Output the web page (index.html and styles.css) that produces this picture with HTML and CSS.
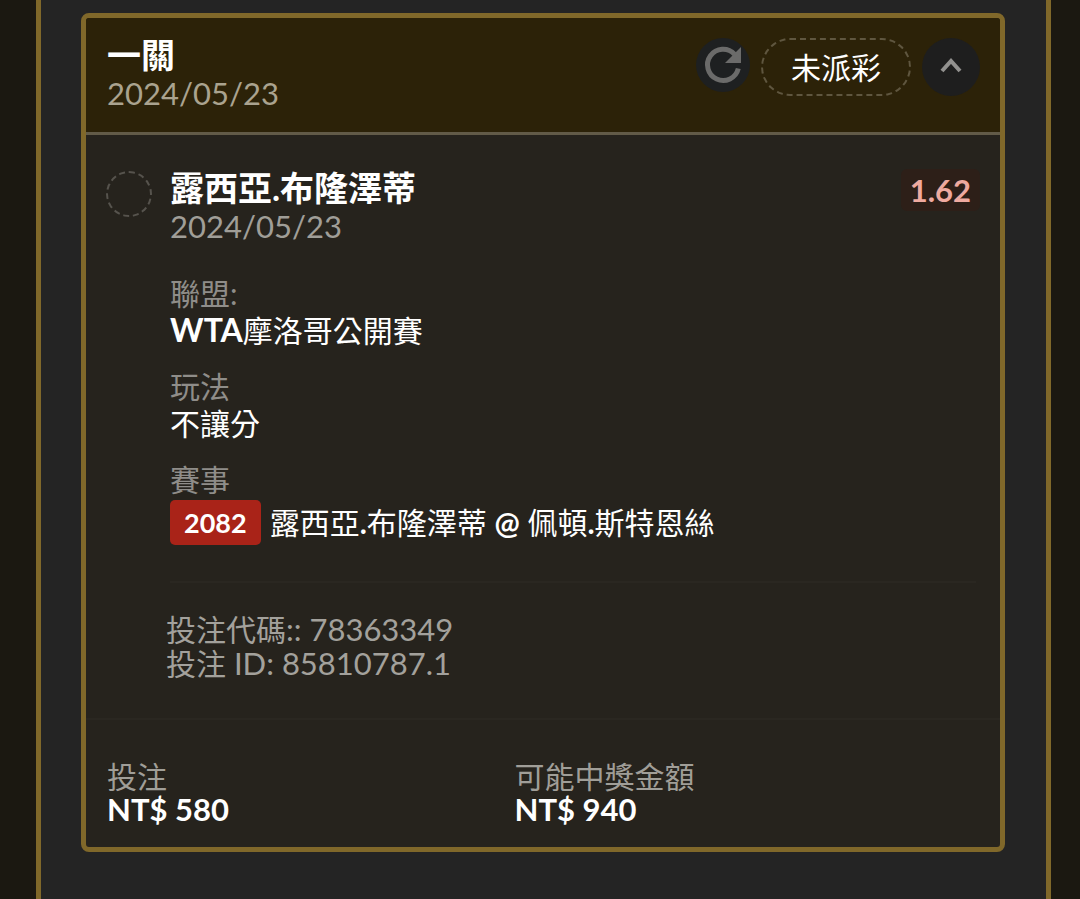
FILE: index.html
```html
<!DOCTYPE html>
<html lang="zh-Hant">
<head>
<meta charset="utf-8">
<meta name="viewport" content="width=device-width, initial-scale=1">
<title>投注紀錄</title>
<link rel="stylesheet" href="styles.css">
</head>
<body>
<main class="panel">
  <article class="card">
    <header class="card-head">
      <div class="head-text">
        <h1 class="title">一關</h1>
        <p class="date">2024/05/23</p>
      </div>
      <div class="actions">
        <button class="round refresh" type="button" aria-label="重新整理">
          <svg viewBox="0 0 40 40" width="40" height="40" aria-hidden="true">
            <path d="M35.300 23.500A15.600 15.600 0 1 1 31.500 9.200" fill="none" stroke="#6b6b6a" stroke-width="5"/>
            <path d="M38 2V18H22Z" fill="#6b6b6a"/>
          </svg>
        </button>
        <span class="pill">未派彩</span>
        <button class="round toggle" type="button" aria-label="收合">
          <svg viewBox="0 0 24 20" width="24" height="20" aria-hidden="true">
            <path d="M3 14L12 4L21 14" fill="none" stroke="#92918f" stroke-width="4"/>
          </svg>
        </button>
      </div>
    </header>
    <section class="pick">
      <span class="ring"></span>
      <div class="pick-main">
        <div class="pick-head">
          <div>
            <h2 class="title">露西亞.布隆澤蒂</h2>
            <p class="date">2024/05/23</p>
          </div>
          <span class="odds">1.62</span>
        </div>
        <dl class="details">
          <div class="detail"><dt>聯盟:</dt><dd><b class="league">WTA</b>摩洛哥公開賽</dd></div>
          <div class="detail"><dt>玩法</dt><dd>不讓分</dd></div>
          <div class="detail"><dt>賽事</dt><dd class="match"><span class="badge">2082</span><span>露西亞<b>.</b>布隆澤蒂 <b>@</b> 佩頓<b>.</b>斯特恩絲</span></dd></div>
        </dl>
        <div class="codes">
          <p>投注代碼<span class="num">:: 78363349</span></p>
          <p>投注<span class="num"> ID: 85810787.1</span></p>
        </div>
      </div>
    </section>
    <footer class="totals">
      <dl class="total"><dt>投注</dt><dd>NT$ 580</dd></dl>
      <dl class="total"><dt>可能中獎金額</dt><dd>NT$ 940</dd></dl>
    </footer>
  </article>
</main>
</body>
</html>
```
FILE: styles.css
```css
* { box-sizing: border-box; }
body {
  margin: 0;
  padding: 0 29px 0 36px;
  min-height: 100vh;
  display: flex;
  background: #1b1811;
  color: #fff;
  font-family: Lato, "Noto Sans CJK TC", sans-serif;
  font-size: 30px;
}
h1, h2, p, dl, dd { margin: 0; }
b { font-weight: 700; }
.league { font-size: 32px; line-height: 1; }
.panel {
  flex: 1;
  padding: 13px 41px 46px 40px;
  background: #242424;
  border: solid #80682a;
  border-width: 0 5px;
}
.card {
  background: #26231d;
  border: 5px solid #80682a;
  border-radius: 8px;
}
.card-head {
  display: flex;
  justify-content: space-between;
  align-items: flex-start;
  padding: 18px 20px 20px 21px;
  background: #2c2208;
  border-bottom: 3px solid #625b48;
  border-radius: 3px 3px 0 0;
}
.title {
  font-size: 34px;
  line-height: 38px;
  font-weight: 700;
}
.date {
  font-size: 31px;
  line-height: 38px;
  color: #a09e98;
}
.card-head .date { color: #aaa38f; }
.actions {
  display: flex;
  align-items: flex-start;
  gap: 11px;
  padding-top: 2px;
}
.round {
  display: grid;
  place-items: center;
  padding: 0;
  border: 0;
  border-radius: 50%;
}
.refresh { width: 54px; height: 54px; background: #1e2021; }
.toggle { width: 58px; height: 58px; background: #1e1e1e; }
.pill {
  padding: 0 28px;
  border: 2px dashed #5f563f;
  border-radius: 29px;
  line-height: 54px;
}
.pick {
  display: flex;
  align-items: flex-start;
  gap: 18px;
  padding: 34px 24px 0 20px;
  border-bottom: 2px solid #2a2721;
}
.ring {
  flex: none;
  width: 46px;
  height: 46px;
  margin-top: 2px;
  border: 2px dashed #56534d;
  border-radius: 50%;
}
.pick-main { flex: 1; }
.pick-head {
  display: flex;
  justify-content: space-between;
  align-items: flex-start;
}
.odds {
  margin-right: -4px;
  padding: 0 9px;
  border-radius: 6px;
  background: #2d1f18;
  color: #efaaa0;
  font-size: 31px;
  font-weight: 700;
  line-height: 42px;
}
.details {
  display: grid;
  gap: 19px;
  padding: 30px 0 36px;
  border-bottom: 2px solid #2a2721;
}
.detail { line-height: 37px; }
dt { color: #8f8d89; }
.match {
  display: flex;
  align-items: center;
  gap: 9px;
  margin-top: 2px;
}
.badge {
  padding: 0 14px;
  border-radius: 5px;
  background: #a92318;
  font-size: 27px;
  font-weight: 700;
  line-height: 45px;
}
.codes {
  margin-left: -4px;
  padding: 29px 0 38px;
  line-height: 34px;
  color: #a3a19c;
}
.num { font-size: 31px; }
.totals {
  display: grid;
  grid-template-columns: 1fr 1fr;
  padding: 40px 78px 21px 21px;
  line-height: 33px;
}
.totals dt { color: #a09e98; }
.totals dd { font-size: 31px; font-weight: 700; }
```
